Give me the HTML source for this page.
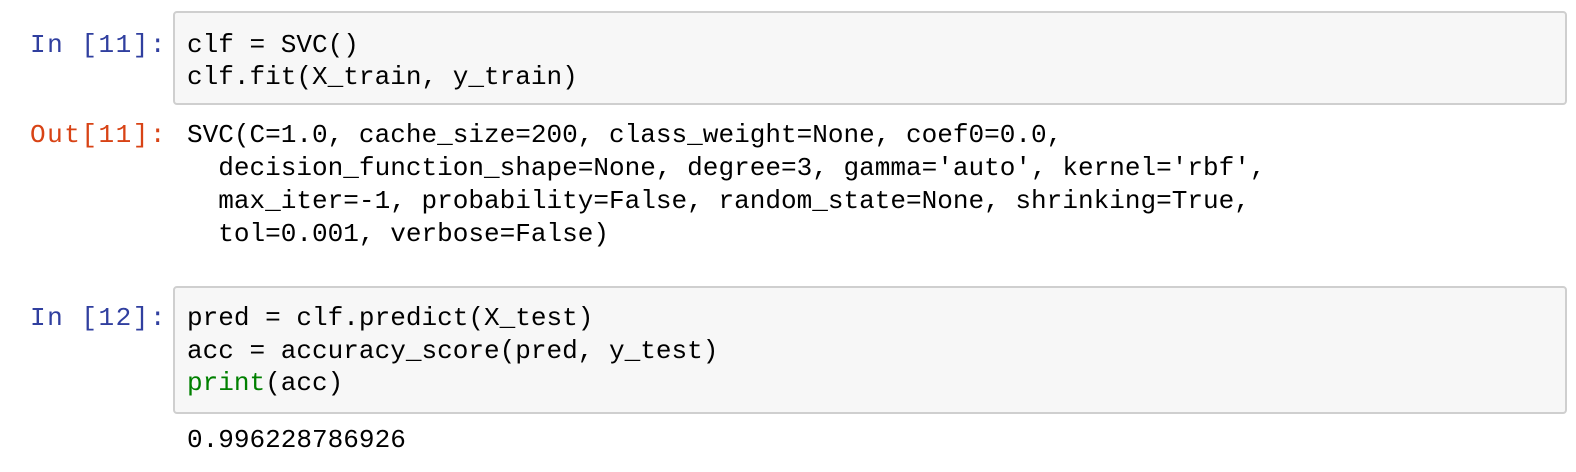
<!DOCTYPE html>
<html><head><style>
body{margin:0;width:1576px;height:472px;background:#fff;overflow:hidden;font-family:"Liberation Mono",monospace;font-size:26.05px;color:#000}
.box{position:absolute;left:173px;width:1394px;background:#f7f7f7;border:2px solid #cfcfcf;border-radius:4px;box-sizing:border-box}
.l{position:absolute;white-space:pre;line-height:33px;height:33px}
.p{position:absolute;white-space:pre;line-height:33px;left:30px;width:137px;letter-spacing:1.5px;text-align:left}
.in{color:#303F9F}.out{color:#D84315}.g{color:#008000}
</style></head><body>
<div class="box" style="top:11px;height:94px"></div>
<div class="box" style="top:286px;height:128px"></div>
<div class="p in" style="top:29px">In [11]:</div>
<div class="l" style="left:187px;top:29px">clf = SVC()</div>
<div class="l" style="left:187px;top:61px">clf.fit(X_train, y_train)</div>
<div class="p out" style="top:119px">Out[11]:</div>
<div class="l" style="left:187px;top:119px">SVC(C=1.0, cache_size=200, class_weight=None, coef0=0.0,
  decision_function_shape=None, degree=3, gamma='auto', kernel='rbf',
  max_iter=-1, probability=False, random_state=None, shrinking=True,
  tol=0.001, verbose=False)</div>
<div class="p in" style="top:302px">In [12]:</div>
<div class="l" style="left:187px;top:302px">pred = clf.predict(X_test)</div>
<div class="l" style="left:187px;top:335px">acc = accuracy_score(pred, y_test)</div>
<div class="l" style="left:187px;top:367px"><span class="g">print</span>(acc)</div>
<div class="l" style="left:187px;top:424px">0.996228786926</div>
</body></html>
